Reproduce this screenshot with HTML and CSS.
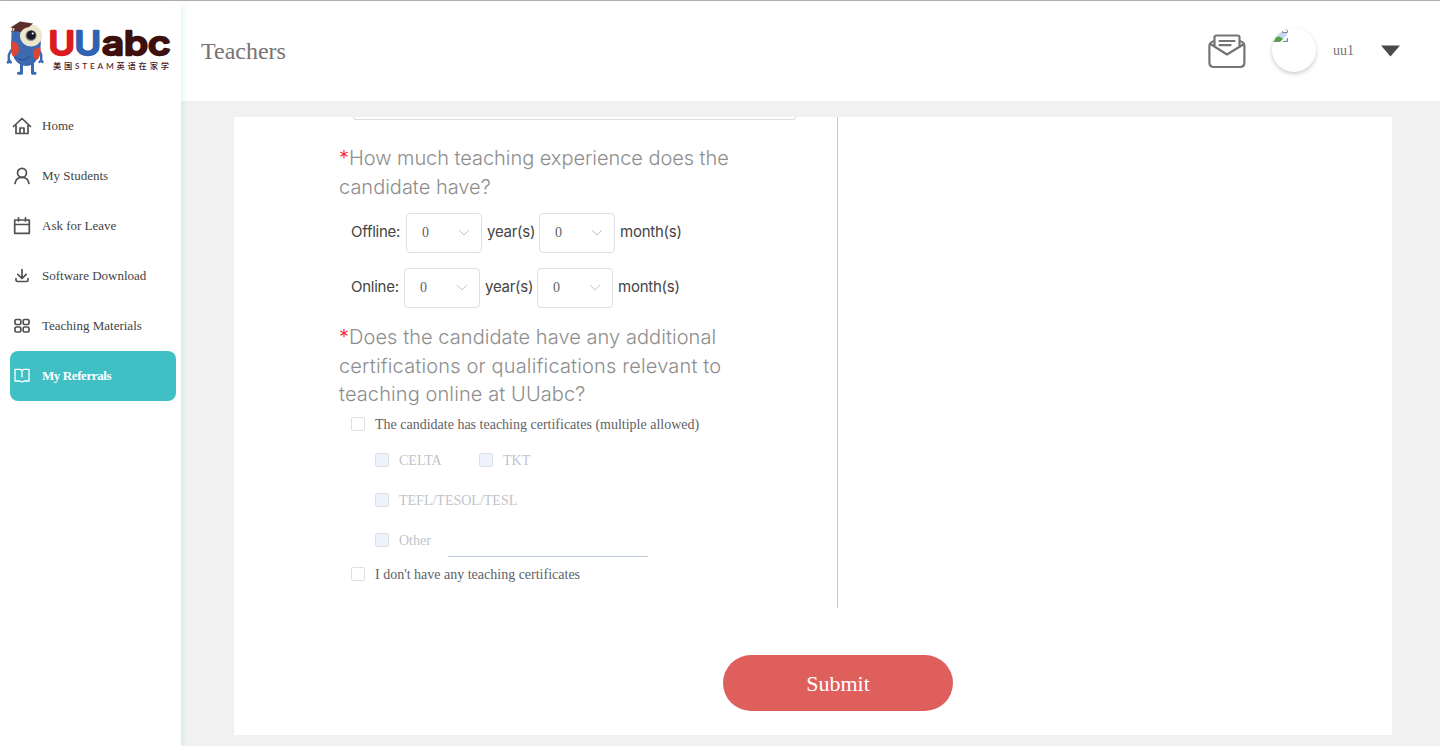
FILE: index.html
```
<!DOCTYPE html>
<html lang="en">
<head>
<meta charset="utf-8">
<title>Teachers</title>
<link rel="stylesheet" href="styles.css">
</head>
<body>
<div class="app">
  <aside class="sidebar">
    <svg class="logo" width="181" height="100" viewBox="0 0 181 100">
      <g fill="none" stroke="#396bb5" stroke-width="2.400" stroke-linecap="round" stroke-linejoin="round">
        <path d="M11 49.500L8.800 54v7M8.800 60l-1 1.500M10 60l.8 1.500M39 49l2.200 4.500V60M41 59.500l-1.500 1.500M41.500 59.500l1 1.500"/>
        <path d="M21.500 63v9.200h-3M32.500 63v9.200h2.500" stroke-width="3"/>
      </g>
      <path d="M11.500 30q8-2 15-3l14 8q1.500 17-4.500 25-4 5-10 5-7 0-11.500-7-4-8-3-28z" fill="#3d69b1"/>
      <path d="M11 40.500q7-.5 8 6.500 0 8-6 8.500-2.500-2-2-15z" fill="#dc4534"/>
      <path d="M40.500 46.500q-7-.5-7.500 6 0 6 4.500 6 3.500-3 3-12z" fill="#dc4534"/>
      <path d="M15 56q7 6 16-1" fill="none" stroke="#294d8b"/>
      <circle cx="31" cy="34.500" r="11" fill="#ece6cc"/>
      <circle cx="31" cy="34.500" r="5.600" fill="#8b8b7d"/>
      <circle cx="31.200" cy="34.300" r="4.500" fill="#1c1726"/>
      <circle cx="32.700" cy="32.500" r="1.100" fill="#fff"/>
      <path d="M10.500 26.500L20 20.500l13 2-4 3.500q-6 1-8 5-4-1-7-.5l.5-3z" fill="#5b302c"/>
      <path d="M13 27l-1.200 4" stroke="#7c4739"/>
      <g class="logo-name">
        <text class="red" x="48.500" y="53.500" textLength="26.500" lengthAdjust="spacingAndGlyphs">U</text>
        <text class="blue" x="74.500" y="53.500" textLength="26.500" lengthAdjust="spacingAndGlyphs">U</text>
        <text class="brown" x="102" y="53.500" textLength="68.500" lengthAdjust="spacingAndGlyphs">abc</text>
      </g>
      <text class="logo-tag" x="53" y="68" textLength="116">美国STEAM英语在家学</text>
    </svg>
    <nav class="menu">
      <a class="item"><svg class="icon" viewBox="0 0 20 20"><path d="M1.500 10.500L10 2.500l8.500 8M4 9v8.500h12V9M8 17.500v-5.500h4v5.500"/></svg>Home</a>
      <a class="item"><svg class="icon" viewBox="0 0 20 20"><circle cx="10" cy="6.800" r="4.500"/><path d="M3 17.500q1-6.200 7-6.200t7 6.200"/></svg>My Students</a>
      <a class="item"><svg class="icon" viewBox="0 0 20 20"><path d="M2.700 4h14.600v13.300H2.700zM2.700 8.500h14.600M6.500 1.800V5M13.500 1.800V5"/></svg>Ask for Leave</a>
      <a class="item"><svg class="icon" viewBox="0 0 20 20"><path d="M10 3.500v8.500M5.800 8.300L10 12.500l4.200-4.200M4 12.500v1.500q0 1.500 1.500 1.500h9q1.500 0 1.500-1.500v-1.500"/></svg>Software Download</a>
      <a class="item"><svg class="icon" viewBox="0 0 20 20"><rect x="3" y="3.500" width="5.800" height="5" rx="1.300"/><rect x="11.200" y="3.500" width="5.800" height="5" rx="1.300"/><rect x="3" y="11" width="5.800" height="5" rx="1.300"/><rect x="11.200" y="11" width="5.800" height="5" rx="1.300"/></svg>Teaching Materials</a>
      <a class="item active"><svg class="icon" viewBox="0 0 20 20"><path d="M8 3.300H3V15h5l2 1 2-1h5V3.300h-5l-2 1-2-1zM10 4.500V11"/></svg>My Referrals</a>
    </nav>
  </aside>
  <div class="main">
    <header class="header">
      <h1 class="title">Teachers</h1>
      <svg class="mail" viewBox="0 0 40 36" width="40" height="36"><g fill="none" stroke="#777374" stroke-width="2.200" stroke-linejoin="round" stroke-linecap="round"><path d="M6.500 8.300Q2.400 9.500 2.400 13v16.500q0 4.500 4.500 4.500h26q4.500 0 4.500-4.500V13q0-3.500-4-4.700"/><path d="M7.500 13V4.500q0-2 2-2h21q2 0 2 2V13M3.500 11L20 21.500 37 11"/><path d="M12.500 8h15M12.500 12.200h11"/></g></svg>
      <span class="avatar"><svg width="16" height="14" viewBox="0 0 16 14"><path d="M0 14V7Q3 2 9 0h2v4h4v10z" fill="#c5d6f6"/><path d="M0 14q6-10 12-2v2z" fill="#52a63c"/><path d="M7.500 14.500L16 6v3l-4 5.500z" fill="#fff"/><path d="M0 13.500h8M11 13.500h4.500V10M10.500 1v3.500h5V2.500l-2-1.500h-3" stroke="#858585" fill="none"/></svg></span>
      <span class="user">uu1</span>
      <svg class="caret" width="20" height="12" viewBox="0 0 20 12"><path d="M0 .5h19L9.500 11.500z" fill="#4a4a4a"/></svg>
    </header>
    <main class="content">
      <section class="card">
        <div class="form">
          <div class="cut-input"></div>
          <p class="question"><span class="line q1"><i>*</i>How much teaching experience does the</span><span class="line q2">candidate have?</span></p>
          <div class="row"><span class="offline">Offline:</span><span class="select">0<svg class="chev" viewBox="0 0 12 8"><path d="M1 1l5 5 5-5"/></svg></span><span class="unit-y">year(s)</span><span class="select">0<svg class="chev" viewBox="0 0 12 8"><path d="M1 1l5 5 5-5"/></svg></span><span class="unit-m">month(s)</span></div>
          <div class="row"><span class="online">Online:</span><span class="select">0<svg class="chev" viewBox="0 0 12 8"><path d="M1 1l5 5 5-5"/></svg></span><span class="unit-y">year(s)</span><span class="select">0<svg class="chev" viewBox="0 0 12 8"><path d="M1 1l5 5 5-5"/></svg></span><span class="unit-m">month(s)</span></div>
          <p class="question second"><span class="line q3"><i>*</i>Does the candidate have any additional</span><span class="line q4">certifications or qualifications relevant to</span><span class="line q5">teaching online at UUabc?</span></p>
          <label class="check"><b></b><span>The candidate has teaching certificates (multiple allowed)</span></label>
          <div class="certs">
            <div class="cert-row"><label class="check off celta"><b></b><span>CELTA</span></label><label class="check off"><b></b><span>TKT</span></label></div>
            <div class="cert-row"><label class="check off"><b></b><span>TEFL/TESOL/TESL</span></label></div>
            <div class="cert-row"><label class="check off other"><b></b><span>Other</span></label><span class="blank"></span></div>
          </div>
          <label class="check none"><b></b><span>I don't have any teaching certificates</span></label>
        </div>
        <button class="submit">Submit</button>
      </section>
    </main>
  </div>
</div>
</body>
</html>
```
FILE: styles.css
```
* { box-sizing: border-box; }
body { margin: 0; font-family: "Liberation Serif", "Times New Roman", serif; background: #f1f1f1; overflow: hidden; }
.app { display: flex; height: 746px; border-top: 1px solid #b0adae; }
.sidebar { position: relative; width: 181px; background: #fff; box-shadow: 0 2px 8px rgba(64, 192, 180, .2); flex: none; z-index: 1; }
.logo { display: block; }
.logo-name { font: 500 33px "Inter", sans-serif; stroke-width: 2.4; stroke-linejoin: round; }
.red { fill: #dc1b20; stroke: #dc1b20; }
.blue { fill: #2f63b2; stroke: #2f63b2; }
.brown { fill: #3d100d; stroke: #3d100d; }
.logo-tag { font: 500 8.300px "Lato", "Noto Sans CJK SC", sans-serif; fill: #4b201c; }
.menu { padding: 0 5px 0 10px; }
.item { display: flex; align-items: center; height: 50px; padding-left: 2px; gap: 10px; font-size: 13px; color: #444; border-radius: 8px; }
.icon { width: 20px; height: 20px; fill: none; stroke: #505050; stroke-width: 1.7; stroke-linejoin: round; stroke-linecap: round; }
.active { background: #40c0c5; color: #fff; font-weight: 700; letter-spacing: -.4px; }
.active .icon { stroke: #fff; stroke-width: 1.3; }
.main { flex: 1; }
.header { display: flex; align-items: center; height: 100px; padding: 0 39px 0 20px; background: #fff; }
.title { margin: 0 auto 0 0; font-size: 24px; font-weight: 400; color: #777374; }
.mail { margin-right: 25px; }
.avatar { width: 44px; height: 44px; border-radius: 50%; box-shadow: 0 2px 4px rgba(0, 0, 0, .2); margin: 0 17px 2px 0; overflow: hidden; }
.avatar svg { display: block; }
.user { width: 48px; font-size: 14px; color: #777374; }
.content { padding: 16px 48px 0 53px; }
.card { height: 618px; background: #fff; overflow: hidden; }
.form { width: 604px; height: 491px; padding-left: 105px; border-right: 1px solid #c7c9cf; }
.cut-input { width: 443px; height: 3px; margin-left: 14px; border: 1px solid #dcdfe6; border-top: 0; border-radius: 0 0 4px 4px; }
.question { margin: 24px 0 12px; font: 300 20px/28.600px "Inter", sans-serif; color: #8e8e8e; }
.question i { color: #f5222d; font-style: normal; }
.line { display: block; white-space: nowrap; }
.q1 { letter-spacing: -.05px; }
.q3 { letter-spacing: .06px; }
.q4 { letter-spacing: .16px; }
.q5 { letter-spacing: .1px; }
.row { display: flex; align-items: center; height: 40px; margin: 0 0 15px 12px; font: 400 15px "Inter", sans-serif; color: #444; white-space: nowrap; }
.offline, .online, .unit-y, .unit-m { padding-bottom: 3px; letter-spacing: -.25px; }
.offline { width: 55px; }
.online { width: 53px; }
.unit-y { width: 52px; }
.select { display: flex; align-items: center; justify-content: space-between; width: 76px; height: 40px; margin-right: 5px; padding: 0 11px 0 15px; border: 1px solid #dcdfe6; border-radius: 4px; font: 14px "Liberation Serif", serif; color: #606266; }
.chev { width: 12px; height: 8px; fill: none; stroke: #c0c4cc; }
.second { margin: 0 0 5px; }
.check { display: flex; align-items: center; height: 20px; margin-left: 12px; gap: 10px; font-size: 14px; color: #606266; white-space: nowrap; }
.check b { width: 14px; height: 14px; border: 1px solid #dcdfe6; border-radius: 2px; background: #fff; }
.check span { padding-top: 2px; }
.certs { padding: 6px 0 0 36px; }
.cert-row { display: flex; align-items: center; height: 40px; }
.cert-row .check { margin-left: 0; }
.off { color: #c0c4cc; }
.check.off b { background: #edf2fc; }
.celta { width: 104px; }
.other { width: 73px; }
.blank { width: 200px; height: 36px; border-bottom: 1px solid #bfcbd9; margin-bottom: 1px; }
.none { margin-top: 4px; }
.submit { display: block; width: 230px; height: 56px; margin: 47px 0 0 489px; border: 0; border-radius: 28px; background: #df5f5d; color: #fff; font: 22px "Liberation Serif", serif; padding-top: 3px; }
```
